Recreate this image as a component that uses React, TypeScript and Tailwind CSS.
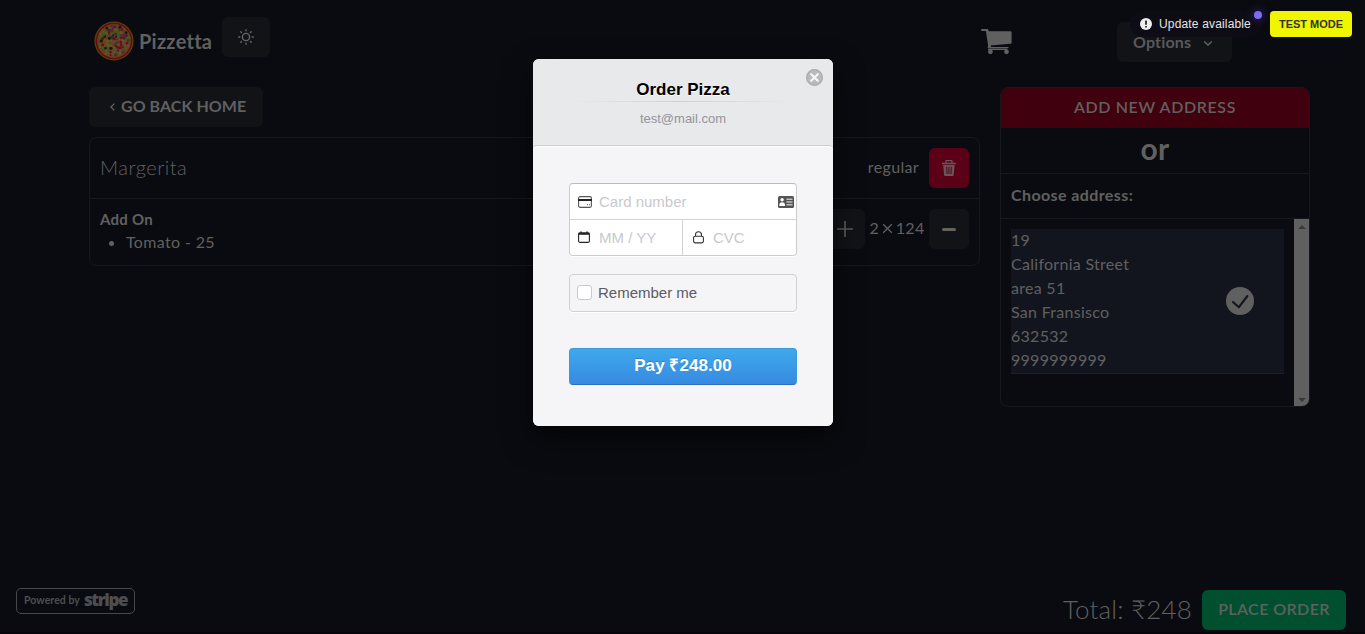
import React from "react";

const lines = ["19", "California Street", "area 51", "San Fransisco", "632532", "9999999999"];

const colors = ["#6a4a22", "#2c5c10", "#66101c", "#6a5326", "#14161a", "#5a2244", "#5c4a3a", "#6b3d1c", "#3c5c12", "#700c10", "#5f5524", "#4a1838"];

const toppings = Array.from({ length: 105 }, (_, i) => {
  const radius = 15.4 * Math.sqrt((i + 0.5) / 105);
  const angle = i * 2.39996;
  return {
    x: 20 + radius * Math.cos(angle),
    y: 20 + radius * Math.sin(angle),
    r: 1 + ((i * 7) % 5) * 0.16,
    fill: colors[(i * 17 + ((i * i) % 7)) % colors.length],
  };
});

function Pizza() {
  return (
    <svg width="40" height="40" viewBox="0 0 40 40">
      <circle cx="20" cy="20" r="19.6" fill="#5e3c10" />
      <circle cx="20" cy="20" r="18.3" fill="#650d08" />
      <circle cx="20" cy="20" r="16.9" fill="#5c4420" />
      {toppings.map((t, i) => <circle key={i} cx={t.x} cy={t.y} r={t.r} fill={t.fill} />)}
    </svg>
  );
}

function Header() {
  return (
    <header className="flex h-[87px] items-start">
      <div className="ml-[94px] mt-[21px] flex h-10 items-center">
        <Pizza />
        <span className="ml-[5px] w-[83px] whitespace-nowrap text-xl font-bold tracking-[0.25px]">Pizzetta</span>
      </div>
      <button className="mt-[17px] flex h-10 w-12 items-center justify-center rounded-md bg-[#121317]">
        <svg width="16" height="16" viewBox="0 0 16 16" fill="none" stroke="#666" strokeWidth="1.4" strokeLinecap="round">
          <circle cx="8" cy="8" r="3.6" />
          <path d="M8 .7v1M8 14.3v1M.7 8h1M14.3 8h1M2.8 2.8l.7.7M12.5 12.5l.7.7M2.8 13.2l.7-.7M12.5 3.5l.7-.7" />
        </svg>
      </button>
      <svg className="ml-[711px] mt-[28px]" width="31" height="28" viewBox="0 0 31 28">
        <path d="M.9 1h5.2c.8 0 1.1.5 1.3 1.2l.4 1h21.4c.9 0 1.4.4 1.4 1.2v10.1c0 .8-.4 1.2-1.2 1.3L9.8 17.4l.2 1.5h17c.9 0 .9 1.3 0 1.3H7.9c-1 0-1.3-.6-1.2-1.4l.4-1.4L4.9 3H1C-.2 3-.2 1 .9 1z" fill="#606060" />
        <path d="M7 21.3h19.3" stroke="#606060" strokeWidth="1.4" />
        <circle cx="9.4" cy="23.8" r="2.4" fill="#606060" /><circle cx="25.5" cy="23.8" r="2.4" fill="#606060" />
      </svg>
      <button className="ml-[105px] mt-[22px] flex h-10 w-[115px] items-center rounded-md bg-[#121317] pb-px pl-4 text-base font-bold tracking-[0.15px]">
        <span className="w-[70px] whitespace-nowrap text-left text-[#59595b]">Options</span>
        <svg className="mt-[3px]" width="10" height="7" viewBox="0 0 10 7" fill="none" stroke="#666" strokeWidth="1.3"><path d="M1.2 1.5 5 5l3.8-3.5" /></svg>
      </button>
    </header>
  );
}

function OrderCard() {
  return (
    <section className="mt-[10px] h-[129px] rounded-lg border border-[#17181b]">
      <div className="flex h-[61px] items-center justify-between border-b border-[#17181b] px-[10px]">
        <h2 className="pb-[3px] text-xl font-light tracking-[0.5px]">Margerita</h2>
        <div className="flex items-center gap-[10px]">
          <span className="pb-[2px] text-base tracking-[0.35px]">regular</span>
          <button className="flex h-10 w-10 items-center justify-center rounded-md bg-[#5b0017]">
            <svg width="16" height="16" viewBox="0 0 16 16" fill="#66565a">
              <path fillRule="evenodd" d="M4.3 2.7V1.2C4.3.5 4.7 0 5.3 0h5.2c.7 0 1.1.5 1.1 1.2v1.5h3.2v1.5H1V2.7h3.3zm1.3 0h4.7V1.3H5.6v1.4zM2.2 5h11.5l-1 10.2c0 .5-.4.8-.8.8H4c-.5 0-.8-.3-.9-.8L2.2 5zm3 1.8.4 7.3h.9l-.3-7.3h-1zm2.3 0v7.3h1V6.8h-1zm2.3 0-.3 7.3h1l.3-7.3h-1z" />
            </svg>
          </button>
        </div>
      </div>
      <div className="flex items-start justify-between px-[10px] pt-[10px]">
        <div className="leading-6">
          <h3 className="text-[15px] font-bold leading-[21px] tracking-[0.25px]">Add On</h3>
          <ul className="list-disc pl-[26px] text-base tracking-[0.35px]"><li>Tomato - 25</li></ul>
        </div>
        <div className="flex items-center">
          <button className="flex h-10 w-10 items-center justify-center rounded-md bg-[#121317]">
            <svg width="16" height="16" viewBox="0 0 16 16"><path d="M8 0v16M0 8h16" stroke="#5c5c5c" strokeWidth="1.7" /></svg>
          </button>
          <div className="flex w-16 items-center justify-center whitespace-nowrap pb-[2px] text-base">
            <span>2</span>
            <svg className="mx-[3px]" width="11" height="11" viewBox="0 0 11 11"><path d="m1.2 1.2 8.6 8.6m0-8.6-8.6 8.6" stroke="#606060" strokeWidth="1.3" /></svg>
            <span className="tracking-[0.3px]">124</span>
          </div>
          <button className="flex h-10 w-10 items-center justify-center rounded-md bg-[#121317]"><span className="h-[3px] w-[14px] rounded-sm bg-[#66635f]" /></button>
        </div>
      </div>
    </section>
  );
}

function AddressPanel() {
  return (
    <aside className="h-[320px] w-[310px] overflow-hidden rounded-lg border border-[#17181b]">
      <button className="flex h-10 w-full items-center justify-center bg-[#40000e] pb-[2px] text-base font-semibold tracking-[0.6px]">ADD NEW ADDRESS</button>
      <div className="flex h-[46px] items-center justify-center border-b border-[#17181b] pb-[5px] text-[30px] font-bold leading-none tracking-[0.2px]">or</div>
      <div className="flex h-[45px] items-center border-b border-[#17181b] pb-[2px] pl-[10px] text-base font-bold tracking-[0.4px]">Choose address:</div>
      <div className="flex h-[187px]">
        <div className="flex-1 p-[10px]">
          <div className="flex h-[145px] items-center justify-between border-b border-[#1a2031] bg-[#12151e]">
            <address className="pb-[2px] not-italic leading-6 tracking-[0.28px]">{lines.map((l) => <p key={l}>{l}</p>)}</address>
            <svg className="mr-[30px]" width="28" height="28" viewBox="0 0 28 28">
              <circle cx="14" cy="14" r="14" fill="#606060" />
              <path d="m7 15 5.9 5.2L21.4 9" fill="none" stroke="#12151e" strokeWidth="2.1" strokeLinecap="round" strokeLinejoin="round" />
            </svg>
          </div>
        </div>
        <div className="flex w-[15px] flex-col items-center justify-between bg-[#606060] pb-[4px] pt-[6px]">
          <svg width="8" height="4" viewBox="0 0 8 4"><path d="M0 4 4 0l4 4z" fill="#393939" /></svg>
          <svg width="8" height="4" viewBox="0 0 8 4"><path d="m0 0 4 4 4-4z" fill="#393939" /></svg>
        </div>
      </div>
    </aside>
  );
}

function CheckoutModal() {
  return (
    <div className="absolute left-[533px] top-[59px] h-[367px] w-[300px] overflow-hidden rounded-md bg-[#f5f5f7] font-['Liberation_Sans',sans-serif]">
      <div className="relative h-[92px] bg-[#e8e9eb] text-center">
        <h1 className="pt-[20px] text-[17px] font-bold leading-[21px] text-black [text-shadow:0_1px_0_#fff]">Order Pizza</h1>
        <div className="mx-auto mt-px h-px w-[220px] bg-gradient-to-r from-transparent via-[#d0d1d3] to-transparent" />
        <p className="mt-[9px] text-[13px] leading-4 text-[#93949a]">test@mail.com</p>
        <svg className="absolute right-[10px] top-[10px]" width="17" height="17" viewBox="0 0 17 17">
          <circle cx="8.5" cy="8.5" r="8.5" fill="#b9babb" /><circle cx="8.5" cy="8.5" r="7.8" fill="none" stroke="#a9aaab" strokeWidth="1" />
          <path d="m5.2 5.2 6.6 6.6m0-6.6-6.6 6.6" stroke="#f5f5f6" strokeWidth="2.3" strokeLinecap="round" />
        </svg>
      </div>
      <div className="relative -mt-[6px] h-[281px] rounded-t-[4px] border-t border-[#cbccce] bg-[#f5f5f7] px-9 pt-[37px] shadow-[inset_0_1px_0_#fff]">
        <div className="h-[73px] rounded-[4px] border border-[#cbccce] border-t-[#b9babd] bg-white text-[15px] text-[#c8c9cc] shadow-[0_1px_0_#fff]">
          <div className="flex h-9 items-center border-b border-[#d2d3d5]">
            <svg className="ml-[8px]" width="14" height="12" viewBox="0 0 14 12"><rect x=".6" y=".6" width="12.8" height="10.8" rx="1.6" fill="#fff" stroke="#555" strokeWidth="1.1" /><path d="M0 3h14v2H0z" fill="#222" /><path d="M9.5 8v1.3M11.5 8v1.3" stroke="#777" /></svg>
            <span className="ml-[7px] flex-1 pt-[2px]">Card number</span>
            <svg className="mr-[2px]" width="16" height="12" viewBox="0 0 16 12"><rect width="16" height="12" rx="1.5" fill="#555" /><circle cx="4.1" cy="3.8" r="1.7" fill="#fff" /><path d="M1.3 9c0-2 1.4-2.7 2.8-2.7S7 7 7 9v1H1.3z" fill="#fff" /><path d="M8.5 3.2h6M8.5 6h6M8.5 8.8h6" stroke="#f4f4f4" strokeWidth="1" /></svg>
          </div>
          <div className="flex h-[35px] items-center">
            <div className="flex h-full w-[113px] items-center border-r border-[#d2d3d5]">
              <svg className="mb-px ml-[8px]" width="12" height="12" viewBox="0 0 12 12"><rect x=".6" y="2" width="10.8" height="9.4" rx="1.5" fill="#fff" stroke="#222" strokeWidth="1.1" /><path d="M.5 1.6h11v2.2H.5zM2.5.2h1v2h-1zM8.5.2h1v2h-1z" fill="#222" /></svg>
              <span className="ml-[9px] pt-[2px]">MM / YY</span>
            </div>
            <svg className="ml-[10px]" width="11" height="13" viewBox="0 0 11 13" fill="none" stroke="#333" strokeWidth="1.1"><rect x=".6" y="5.2" width="9.8" height="6.7" rx="1.6" /><path d="M2.5 5V3.8a3 3 0 0 1 6 0V5" /></svg>
            <span className="ml-[9px] pt-[2px]">CVC</span>
          </div>
        </div>
        <div className="mt-[18px] flex h-[38px] items-center rounded-[4px] border border-[#d0d1d4] pl-[7px] text-[15px] text-[#5b5b64] shadow-[0_1px_0_#fff]">
          <span className="mb-px mr-[6px] h-[15px] w-[15px] rounded-[3px] border border-[#c9cacd] bg-white" />Remember me
        </div>
        <button className="mt-9 flex h-[37px] w-full items-center justify-center rounded-[4px] border border-[#3b98da] border-b-[#2e6cc2] bg-gradient-to-b from-[#3fa9eb] to-[#378ae1] pb-[2px] text-[17px] font-bold tracking-[0.05px] text-white [text-shadow:0_-1px_0_rgba(30,90,160,.45)]">Pay ₹248.00</button>
      </div>
    </div>
  );
}

export default function App() {
  return (
    <div className="relative flex h-[634px] w-[1365px] flex-col overflow-hidden bg-[#0a0b10] font-[Lato,'Noto_Sans',sans-serif] text-[#606060]">
      <Header />
      <main className="ml-[89px] flex gap-5">
        <div className="w-[891px]">
          <button className="flex h-10 w-[174px] items-center rounded-md bg-[#121317] pl-[21px] text-base font-bold tracking-[0.05px]">
            <svg className="mr-[6px]" width="5" height="8" viewBox="0 0 5 8" fill="none" stroke="#666" strokeWidth="1.2"><path d="M4.3.6.9 4l3.4 3.4" /></svg>
            <span className="whitespace-nowrap pb-[2px]">GO BACK HOME</span>
          </button>
          <OrderCard />
        </div>
        <AddressPanel />
      </main>
      <footer className="mt-auto flex h-[46px] items-start justify-between pl-4 pr-[19px]">
        <div className="flex h-[26px] w-[119px] items-center whitespace-nowrap rounded-[5px] border border-[#46474a] pl-[7px] text-[#4d4e51]">
          <span className="text-[10.5px] font-bold tracking-[0.05px]">Powered by</span>
          <span className="ml-[4px] pb-[3px] font-['Open_Sans'] text-[17px] font-extrabold leading-none tracking-[-1.4px]">stripe</span>
        </div>
        <div className="mt-[2px] flex h-10 items-center">
          <span className="mr-[10px] whitespace-nowrap pb-[2px] text-[26px] font-light tracking-[0.2px]">Total: ₹248</span>
          <button className="flex h-10 w-36 items-center justify-center rounded-md bg-[#00502f] pb-[2px] text-base font-semibold tracking-[0.42px]">PLACE ORDER</button>
        </div>
      </footer>
      <div className="absolute inset-x-0 bottom-0 h-[2px] bg-[#070508]" />
      <div className="absolute left-[533px] top-[59px] h-[367px] w-[300px] rounded-md shadow-[0_12px_30px_rgba(0,0,0,0.6)]" />
      <CheckoutModal />
      <div className="absolute left-[1130px] top-[11px] flex h-[26px] w-[132px] items-center rounded-full bg-[#0e0d16]/80 pl-[10px] font-['Liberation_Sans'] text-xs text-[#e4e4e6]">
        <svg className="mr-[7px]" width="12" height="12" viewBox="0 0 12 12"><circle cx="6" cy="6" r="6" fill="#eee" /><path d="M6 2.5v4.2M6 8.1v1.5" stroke="#111" strokeWidth="1.6" /></svg>
        <span className="whitespace-nowrap tracking-[0.16px]">Update available</span>
        <span className="absolute right-0 top-0 h-2 w-2 rounded-full bg-[#796df2] shadow-[0_0_10px_#4028a0]" />
      </div>
      <div className="absolute left-[1270px] top-[11px] flex h-[26px] w-[82px] items-center justify-center whitespace-nowrap rounded-[4px] bg-[#f0f500] font-['Liberation_Sans'] text-[11px] font-bold text-[#333]">TEST MODE</div>
    </div>
  );
}
